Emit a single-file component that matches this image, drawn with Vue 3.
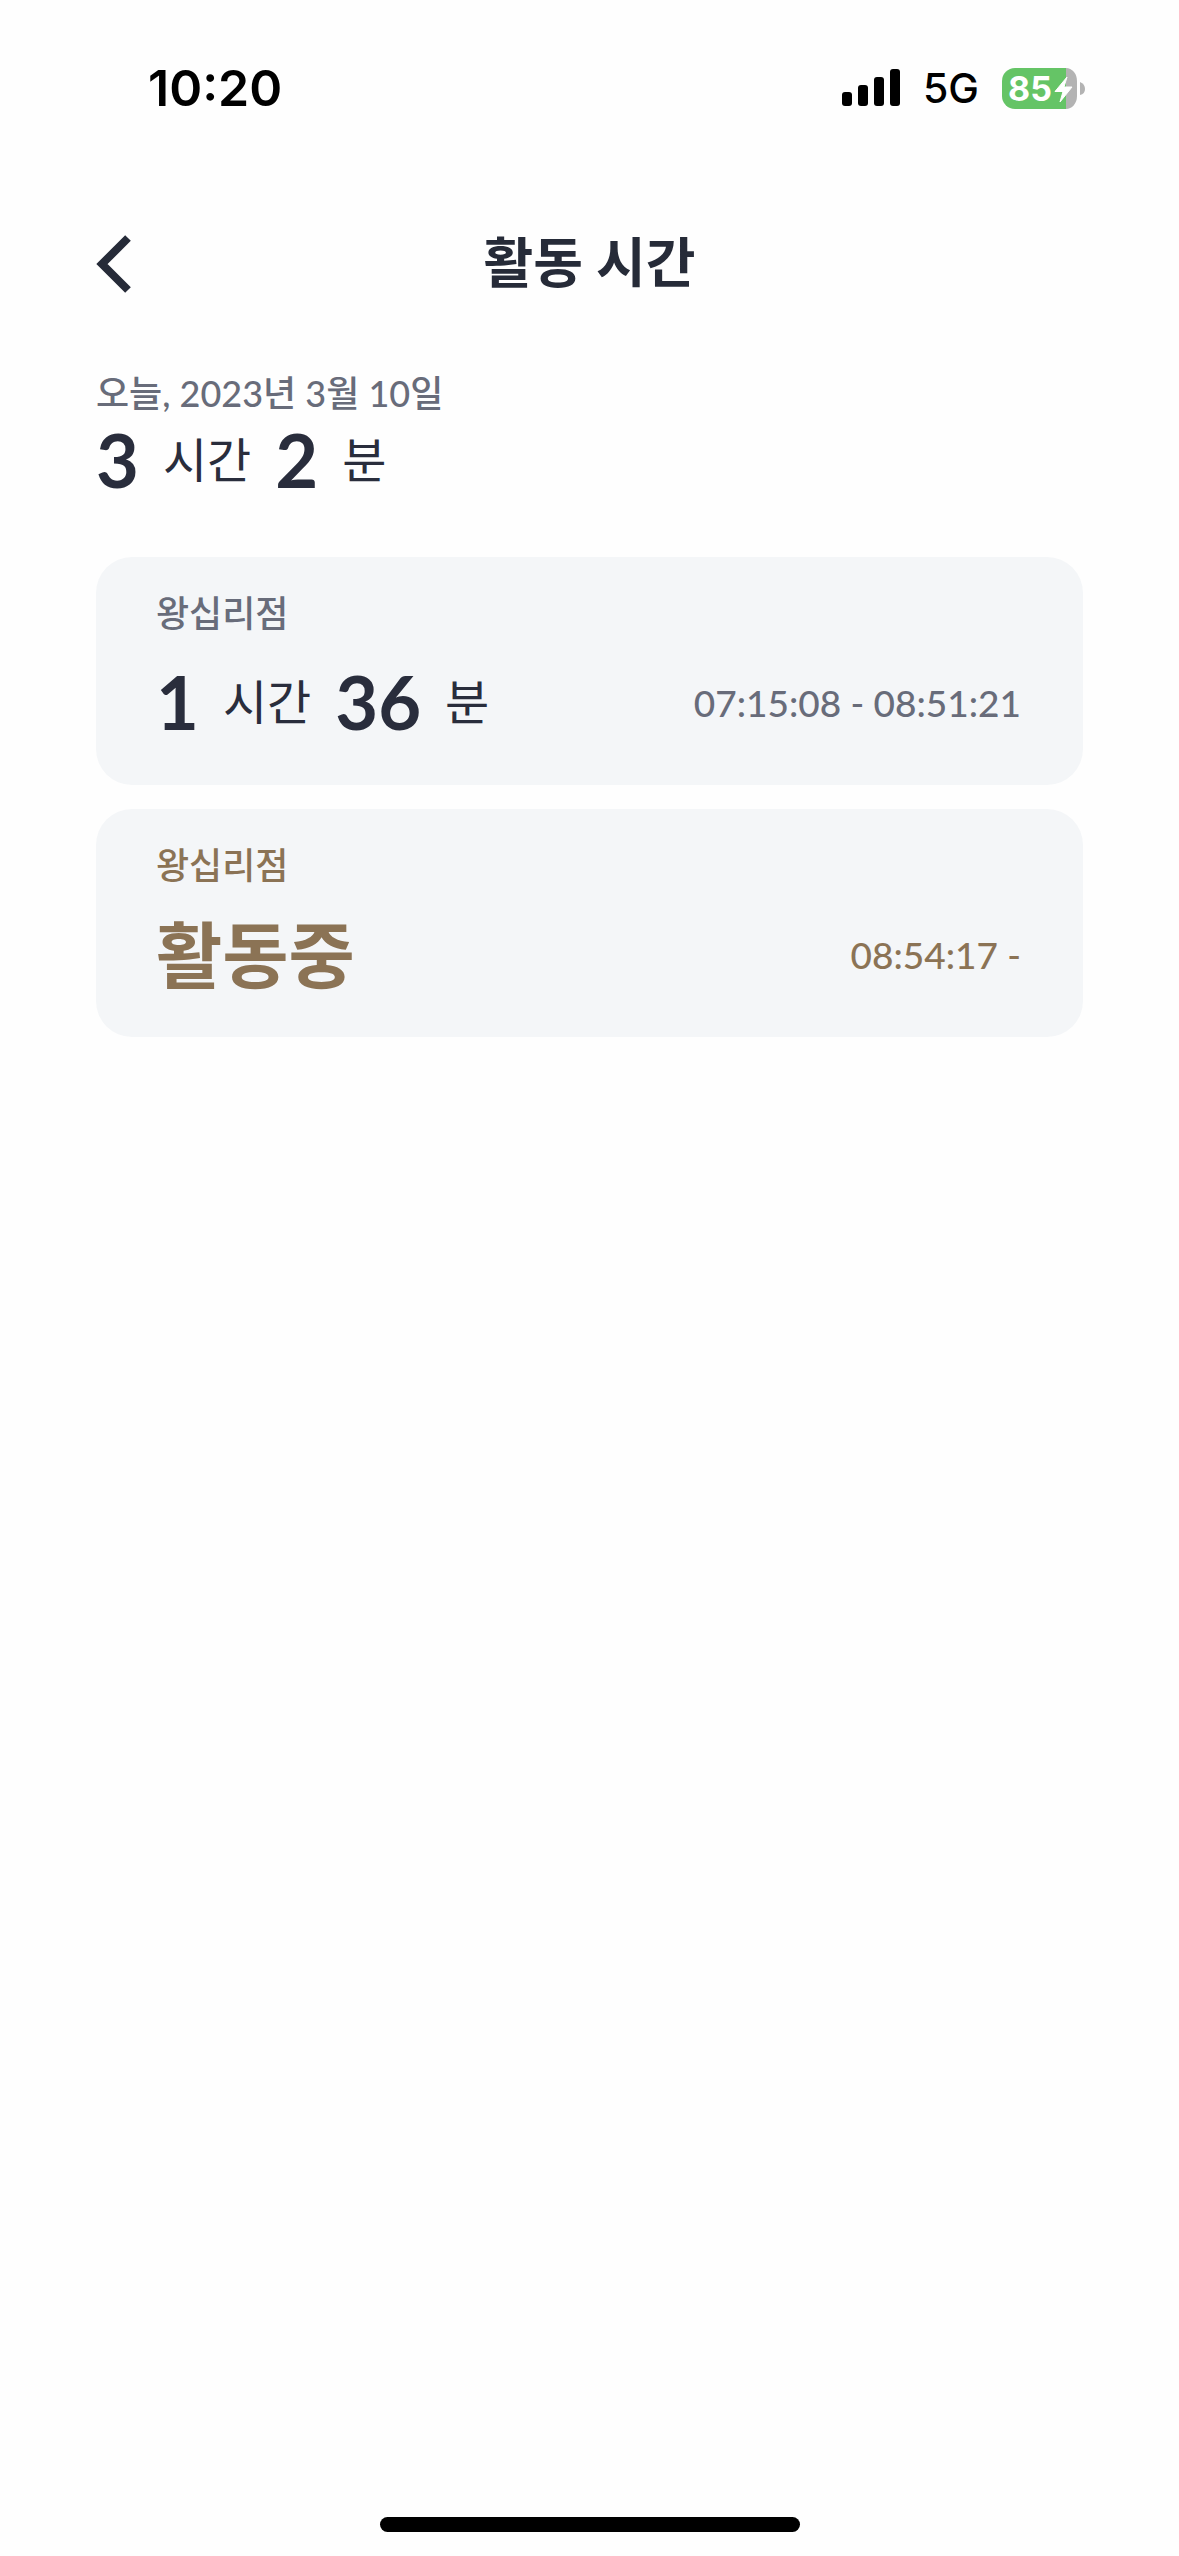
<script setup>
const sessions = [
  { store: '왕십리점', hours: 1, minutes: 36, range: '07:15:08 - 08:51:21', active: false },
  { store: '왕십리점', range: '08:54:17 -', active: true },
]
</script>

<template>
  <div class="screen">
    <div class="status">
      <span class="clock">10:20</span>
      <div class="indicators">
        <svg class="signal" width="58" height="38" viewBox="0 0 58 38" aria-hidden="true">
          <rect x="0" y="23" width="10" height="14" rx="3" />
          <rect x="16" y="16" width="10" height="21" rx="3" />
          <rect x="32" y="8" width="10" height="29" rx="3" />
          <rect x="48" y="0" width="10" height="37" rx="3" />
        </svg>
        <span class="network">5G</span>
        <div class="battery">
          <svg class="battery-shape" width="83" height="41" viewBox="0 0 83 41" aria-hidden="true">
            <path d="M64 0a11 13 0 0 1 11 13v15a11 13 0 0 1-11 13z" fill="#b3b3b3" />
            <path d="M13 0h51v41H13A13 13 0 0 1 0 28V13A13 13 0 0 1 13 0z" fill="#65c466" />
            <path d="M78 14q5 2 5 7t-5 6z" fill="#b3b3b3" />
            <path d="M65 9L53 23.500h8L58 34l12-15h-8z" fill="#fff" stroke="#fff" stroke-width="1" stroke-linejoin="round" />
          </svg>
          <span class="charge">85</span>
        </div>
      </div>
    </div>

    <header class="nav">
      <button class="back" type="button" aria-label="뒤로">
        <svg width="36" height="60" viewBox="0 0 36 60" aria-hidden="true">
          <path d="M32 4L6 30l26 26" fill="none" stroke="currentColor" stroke-width="8" />
        </svg>
      </button>
      <h1 class="title">활동 시간</h1>
    </header>

    <main class="content">
      <section class="summary">
        <p class="label">오늘, 2023년 3월 10일</p>
        <p class="duration">
          <strong>3</strong><span class="unit">시간</span><strong>2</strong><span class="unit">분</span>
        </p>
      </section>

      <ul class="sessions">
        <li v-for="s in sessions" :key="s.range" class="card" :class="{ active: s.active }">
          <p class="label">{{ s.store }}</p>
          <div class="row">
            <p class="duration">
              <strong v-if="s.active" class="state">활동중</strong>
              <template v-else>
                <strong>{{ s.hours }}</strong><span class="unit">시간</span><strong>{{ s.minutes }}</strong><span class="unit">분</span>
              </template>
            </p>
            <span class="range">{{ s.range }}</span>
          </div>
        </li>
      </ul>
    </main>

    <div class="home-indicator"></div>
  </div>
</template>

<style>
body {
  background: #fefefe;
}
</style>

<style scoped>
.screen {
  display: flex;
  flex-direction: column;
  min-height: 100vh;
  box-sizing: border-box;
  padding-bottom: 24px;
  font-family: Lato, "Noto Sans CJK KR", sans-serif;
  color: #292d3c;
}

.status {
  display: flex;
  align-items: center;
  justify-content: space-between;
  height: 176px;
  padding: 0 94px 0 148px;
  font-family: Inter, sans-serif;
  color: #000;
}

.clock {
  font-size: 50px;
  font-weight: 600;
}

.indicators {
  display: flex;
  align-items: center;
}

.network {
  margin: 0 23px;
  font-size: 41px;
  font-weight: 500;
}

.battery {
  position: relative;
  display: flex;
}

.charge {
  position: absolute;
  top: 0;
  left: 6px;
  font-size: 34px;
  line-height: 41px;
  font-weight: 700;
  color: #fff;
}

.nav {
  display: grid;
  grid-template-columns: 1fr auto 1fr;
  align-items: center;
  height: 176px;
  padding: 0 96px;
}

.back {
  display: flex;
  justify-self: start;
  padding: 0;
  border: 0;
  background: none;
  color: #262b38;
}

.title {
  margin: 0;
  padding-bottom: 2px;
  font-size: 54px;
  line-height: 64px;
  font-weight: 700;
  color: #262b38;
}

.content {
  flex: 1;
  padding: 19px 96px 0;
}

p {
  margin: 0;
}

.label {
  font-size: 36px;
  line-height: 44px;
  font-weight: 500;
  color: #686c7a;
}

.duration {
  display: flex;
  align-items: center;
  gap: 24px;
  line-height: 90px;
}

.duration strong {
  font-size: 74px;
  font-weight: 700;
}

.duration .state {
  font-size: 72px;
}

.unit {
  font-size: 48px;
}

.sessions {
  display: flex;
  flex-direction: column;
  gap: 24px;
  margin: 52px 0 0;
  padding: 0;
  list-style: none;
}

.card {
  display: flex;
  flex-direction: column;
  gap: 22px;
  padding: 34px 62px 38px 60px;
  border-radius: 36px;
  background: #f4f6f8;
}

.row {
  display: flex;
  align-items: center;
  justify-content: space-between;
}

.range {
  font-size: 37px;
  font-weight: 500;
  color: #686c7a;
}

.active .label,
.active .duration,
.active .range {
  color: #8b7355;
}

.home-indicator {
  align-self: center;
  width: 420px;
  height: 15px;
  border-radius: 8px;
  background: #000;
}
</style>
